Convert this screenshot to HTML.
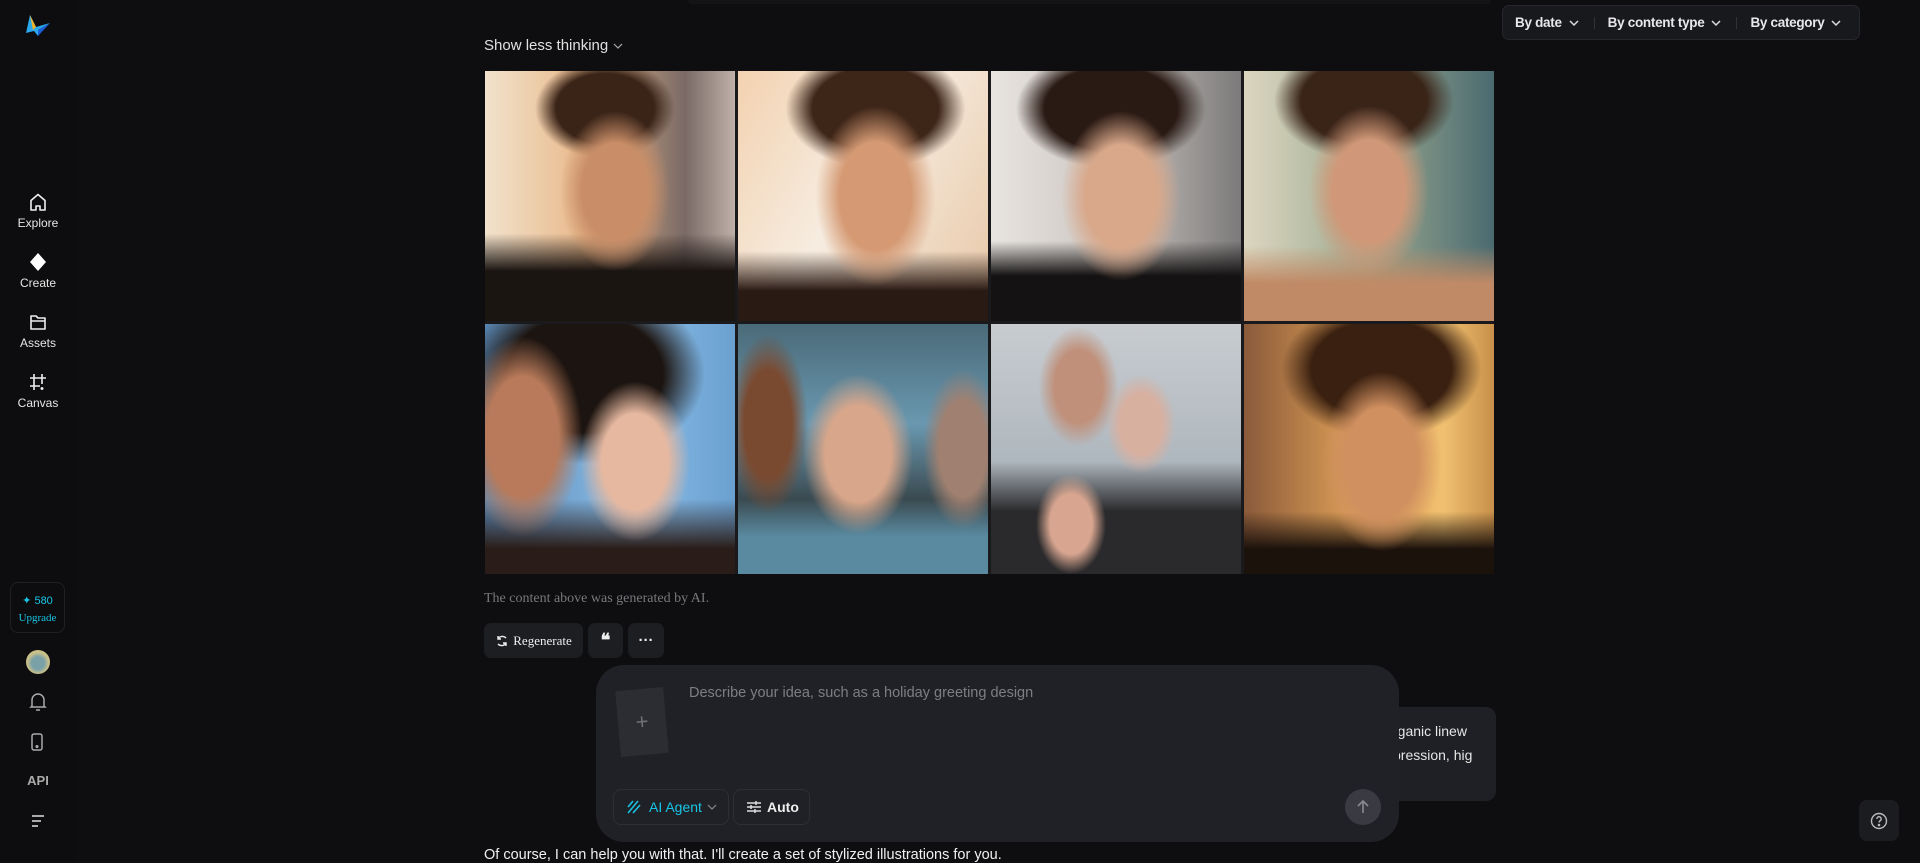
<!DOCTYPE html>
<html><head><meta charset="utf-8">
<style>
*{box-sizing:border-box;margin:0;padding:0}
html,body{width:1920px;height:861px;overflow:hidden;background:#0e0e10;font-family:"Liberation Sans",sans-serif;color:#e8e8ea}
.side{position:absolute;left:0;top:0;width:76px;height:861px;background:#0d0d0f}
.nav{position:absolute;left:0;width:76px;text-align:center;font-size:12px;color:#e6e6e6}
.nav svg{display:block;margin:0 auto 4px}
.top{position:absolute;left:688px;top:0;width:803px;height:4px;background:#141417;border-radius:0 0 6px 6px}
.filters{position:absolute;left:1502px;top:5px;width:358px;height:35px;background:#18191d;border:1px solid #26272c;border-radius:7px;display:flex;align-items:center;font-size:13.5px;font-weight:bold;color:#e8e8ea;white-space:nowrap;letter-spacing:-0.3px}
.filters span{display:flex;align-items:center;white-space:nowrap}
.sep{width:1px;height:12px;background:#333;margin:0 13px}
.show{position:absolute;left:484px;top:37px;font-size:15px;color:#e0e0e0}
.grid{position:absolute;left:485px;top:71px;display:grid;grid-template-columns:repeat(4,250px);grid-auto-rows:250px;gap:3px;background:#1a1a1c}
.grid div{overflow:hidden}
.ai{position:absolute;left:484px;top:591px;font-family:"Liberation Serif",serif;font-size:14px;color:#77787c}
.btn{position:absolute;top:623px;height:35px;background:#1d1e22;border-radius:7px;display:flex;align-items:center;justify-content:center;font-family:"Liberation Serif",serif;font-size:13px;color:#eee}
.bubble{position:absolute;left:1300px;top:707px;width:196px;height:94px;background:#1f2025;border-radius:10px;font-size:14px;color:#e6e6e6;line-height:24px;padding:12px 0 0 93px}
.input{position:absolute;left:596px;top:665px;width:803px;height:177px;background:#202126;border-radius:28px}
.ph{position:absolute;left:93px;top:20px;font-size:14.5px;color:#7d7e84}
.slot{position:absolute;left:22px;top:24px;width:48px;height:66px;background:#2c2d33;transform:rotate(-5deg);color:#6f7076;font-size:22px;text-align:center;line-height:66px}
.pill{position:absolute;top:124px;height:36px;border:1px solid #2e2f35;border-radius:8px;display:flex;align-items:center;font-size:14px}
.send{position:absolute;left:749px;top:124px;width:36px;height:36px;border-radius:50%;background:#3a3b42;display:flex;align-items:center;justify-content:center}
.help{position:absolute;left:1859px;top:800px;width:40px;height:41px;background:#1b1c20;border-radius:8px;display:flex;align-items:center;justify-content:center}
.bottom{position:absolute;left:484px;top:847px;font-size:14.5px;color:#f0f0f0;white-space:nowrap}
</style></head><body>
<div class="side"></div>
<svg style="position:absolute;left:24px;top:14px" width="28" height="24" viewBox="0 0 28 24"><path d="M6 1 L12 13 L26 9 L14 16 L14 22 L10 17 L2 19 Z" fill="#2aa8ea"/><path d="M6 1 L12 13 L9 16 Z" fill="#f0b429"/><path d="M14 16 L26 9 L14 22Z" fill="#1a5fd6"/></svg>
<div class="nav" style="top:192px"><svg width="20" height="20" viewBox="0 0 20 20" fill="none" stroke="#eee" stroke-width="1.6"><path d="M3 18V8.5L10 2.5L17 8.5V18H12V14H8V18Z" stroke-linejoin="round"/></svg>Explore</div>
<div class="nav" style="top:252px"><svg width="20" height="20" viewBox="0 0 20 20"><path d="M10 1 L18 10 L10 19 L2 10Z" fill="#fff"/></svg>Create</div>
<div class="nav" style="top:312px"><svg width="20" height="20" viewBox="0 0 20 20" fill="none" stroke="#eee" stroke-width="1.6"><path d="M3 4H8L10 6H17V17H3Z M3 9H17" stroke-linejoin="round"/></svg>Assets</div>
<div class="nav" style="top:372px"><svg width="20" height="20" viewBox="0 0 20 20" fill="none" stroke="#eee" stroke-width="1.6"><path d="M6 2V18M14 2V12M2 6H18M2 14H12M14 15V18M12.5 16.5H15.5"/></svg>Canvas</div>
<div style="position:absolute;left:10px;top:582px;width:55px;height:51px;border:1px solid #1f2024;border-radius:8px;text-align:center;color:#18c6e6;font-size:11px;padding-top:10px;line-height:17px"><span>✦ 580</span><br><span style="font-family:'Liberation Serif',serif">Upgrade</span></div>
<div style="position:absolute;left:26px;top:650px;width:24px;height:24px;border-radius:50%;background:radial-gradient(circle at 50% 55%,#7aa0a8 35%,#c9c08a 60%)"></div>
<svg style="position:absolute;left:29px;top:692px" width="18" height="20" viewBox="0 0 18 20" fill="none" stroke="#aaa" stroke-width="1.5"><path d="M3 14V8a6 6 0 0112 0v6l1 1H2z M7 18h4"/></svg>
<svg style="position:absolute;left:30px;top:732px" width="14" height="20" viewBox="0 0 14 20" fill="none" stroke="#aaa" stroke-width="1.5"><rect x="2" y="2" width="10" height="16" rx="2"/><circle cx="7" cy="14.5" r=".8" fill="#aaa"/></svg>
<div style="position:absolute;left:0;width:76px;top:773px;text-align:center;font-size:13px;font-weight:bold;color:#aaa">API</div>
<svg style="position:absolute;left:29px;top:814px" width="18" height="14" viewBox="0 0 18 14" stroke="#aaa" stroke-width="2"><path d="M3 2H15M3 7H12M3 12H9"/></svg>

<div class="top"></div>
<div class="filters"><span style="margin-left:12px">By date<svg width="14" height="10" viewBox="0 0 14 10" style="margin-left:5px"><path d="M3 3l4 4 4-4" stroke="#ddd" stroke-width="1.5" fill="none"/></svg></span><div class="sep"></div><span>By content type<svg width="14" height="10" viewBox="0 0 14 10" style="margin-left:5px"><path d="M3 3l4 4 4-4" stroke="#ddd" stroke-width="1.5" fill="none"/></svg></span><div class="sep"></div><span>By category<svg width="14" height="10" viewBox="0 0 14 10" style="margin-left:5px"><path d="M3 3l4 4 4-4" stroke="#ddd" stroke-width="1.5" fill="none"/></svg></span></div>

<div class="show">Show less thinking <svg width="12" height="8" viewBox="0 0 12 8"><path d="M2 2l4 4 4-4" stroke="#aaa" stroke-width="1.2" fill="none"/></svg></div>

<div class="grid">
<div style="background:radial-gradient(ellipse 55px 80px at 52% 48%,#c98e68 60%,transparent 100%),radial-gradient(ellipse 70px 50px at 48% 15%,#3a2418 70%,transparent),linear-gradient(180deg,transparent 65%,#1b1512 80%),linear-gradient(90deg,#f1e2cc 0%,#e9b88a 40%,#7a6a66 80%,#bfb0a8 100%)"></div>
<div style="background:radial-gradient(ellipse 60px 90px at 55% 50%,#d59a74 60%,transparent),radial-gradient(ellipse 90px 60px at 55% 15%,#3d2518 70%,transparent),linear-gradient(180deg,transparent 72%,#2a1a14 88%),linear-gradient(120deg,#f3d2b0 0%,#f6ece0 45%,#e8c7a6 100%)"></div>
<div style="background:radial-gradient(ellipse 60px 85px at 52% 50%,#d9a88a 60%,transparent),radial-gradient(ellipse 95px 60px at 48% 15%,#2a1a14 70%,transparent),linear-gradient(180deg,transparent 68%,#141212 82%),linear-gradient(90deg,#e8e4e0 0%,#c9c4c0 50%,#7c7a7a 100%)"></div>
<div style="background:radial-gradient(ellipse 60px 85px at 50% 48%,#d09878 60%,transparent),radial-gradient(ellipse 90px 60px at 48% 12%,#3a2418 70%,transparent),linear-gradient(180deg,transparent 70%,#c08a66 85%),linear-gradient(90deg,#dcd6c0 0%,#9caa90 50%,#4a6a70 100%)"></div>
<div style="background:radial-gradient(ellipse 55px 80px at 60% 55%,#e6b8a0 60%,transparent),radial-gradient(ellipse 60px 100px at 15% 45%,#b87a5a 60%,transparent),radial-gradient(ellipse 120px 90px at 40% 20%,#1c1410 65%,transparent),linear-gradient(180deg,transparent 70%,#2a1c18 90%),linear-gradient(90deg,#5a8ab8 0%,#8abce6 60%,#6aa0d0 100%)"></div>
<div style="background:radial-gradient(ellipse 55px 80px at 48% 52%,#d8a68a 60%,transparent),radial-gradient(ellipse 40px 90px at 12% 40%,#7a4a30 60%,transparent),radial-gradient(ellipse 40px 80px at 90% 50%,#a08070 60%,transparent),linear-gradient(180deg,#4a6a78 0%,#6a98b0 40%,transparent 70%,#5a8aa0 85%),#3a4a50"></div>
<div style="background:radial-gradient(ellipse 35px 50px at 60% 40%,#d8b0a0 60%,transparent),radial-gradient(ellipse 35px 50px at 32% 80%,#d8a690 60%,transparent),radial-gradient(ellipse 40px 60px at 35% 25%,#c0907a 60%,transparent),linear-gradient(180deg,transparent 55%,#2a2a2c 75%),linear-gradient(180deg,#c8ccd0 0%,#9aa6b0 100%)"></div>
<div style="background:radial-gradient(ellipse 60px 90px at 55% 55%,#d09060 60%,transparent),radial-gradient(ellipse 100px 70px at 55% 18%,#3a2010 70%,transparent),linear-gradient(180deg,transparent 75%,#1c120c 90%),linear-gradient(90deg,#8a5a3a 0%,#e8a85a 50%,#f0c070 80%,#c8904a 100%)"></div>
</div>

<div class="ai">The content above was generated by AI.</div>
<div class="btn" style="left:484px;width:99px"><svg width="14" height="14" viewBox="0 0 14 14" fill="none" stroke="#eee" stroke-width="1.4" style="margin-right:4px"><path d="M11 4A5 5 0 003 5M3 10a5 5 0 008-1M3 2v3h3M11 12V9H8"/></svg>Regenerate</div>
<div class="btn" style="left:588px;width:35px;font-size:18px;font-weight:bold">❝</div>
<div class="btn" style="left:628px;width:36px;font-weight:bold;font-size:15px;font-family:'Liberation Sans'">···</div>

<div class="bubble">rganic linew<br>pression, hig</div>

<div class="input">
<div class="slot">+</div>
<div class="ph">Describe your idea, such as a holiday greeting design</div>
<div class="pill" style="left:17px;width:116px;color:#18c6e6;padding-left:12px"><svg width="18" height="16" viewBox="0 0 18 16" fill="none" stroke="#18c6e6" stroke-width="1.5" style="margin-right:5px"><path d="M2 8L7 2M2 14L12 2M7 14L14 6"/></svg>AI Agent <svg width="12" height="8" viewBox="0 0 12 8" style="margin-left:4px"><path d="M2 2l4 4 4-4" stroke="#888" stroke-width="1.2" fill="none"/></svg></div>
<div class="pill" style="left:137px;width:77px;color:#eee;font-weight:bold;padding-left:12px"><svg width="16" height="14" viewBox="0 0 16 14" stroke="#ddd" stroke-width="1.5" style="margin-right:5px"><path d="M1 3H15M1 7H15M1 11H15M10 1V5M5 5V9M9 9V13"/></svg>Auto</div>
<div class="send"><svg width="14" height="16" viewBox="0 0 14 16" fill="none" stroke="#8a8b90" stroke-width="1.6"><path d="M7 14V2M2 7l5-5 5 5"/></svg></div>
</div>

<div class="help"><svg width="18" height="18" viewBox="0 0 18 18" fill="none" stroke="#bbb" stroke-width="1.4"><circle cx="9" cy="9" r="7.5"/><path d="M6.8 7a2.2 2.2 0 114 1.2c-.8.6-1.8 1-1.8 2.3"/><circle cx="9" cy="13" r=".6" fill="#bbb"/></svg></div>

<div class="bottom">Of course, I can help you with that. I'll create a set of stylized illustrations for you.</div>
</body></html>
